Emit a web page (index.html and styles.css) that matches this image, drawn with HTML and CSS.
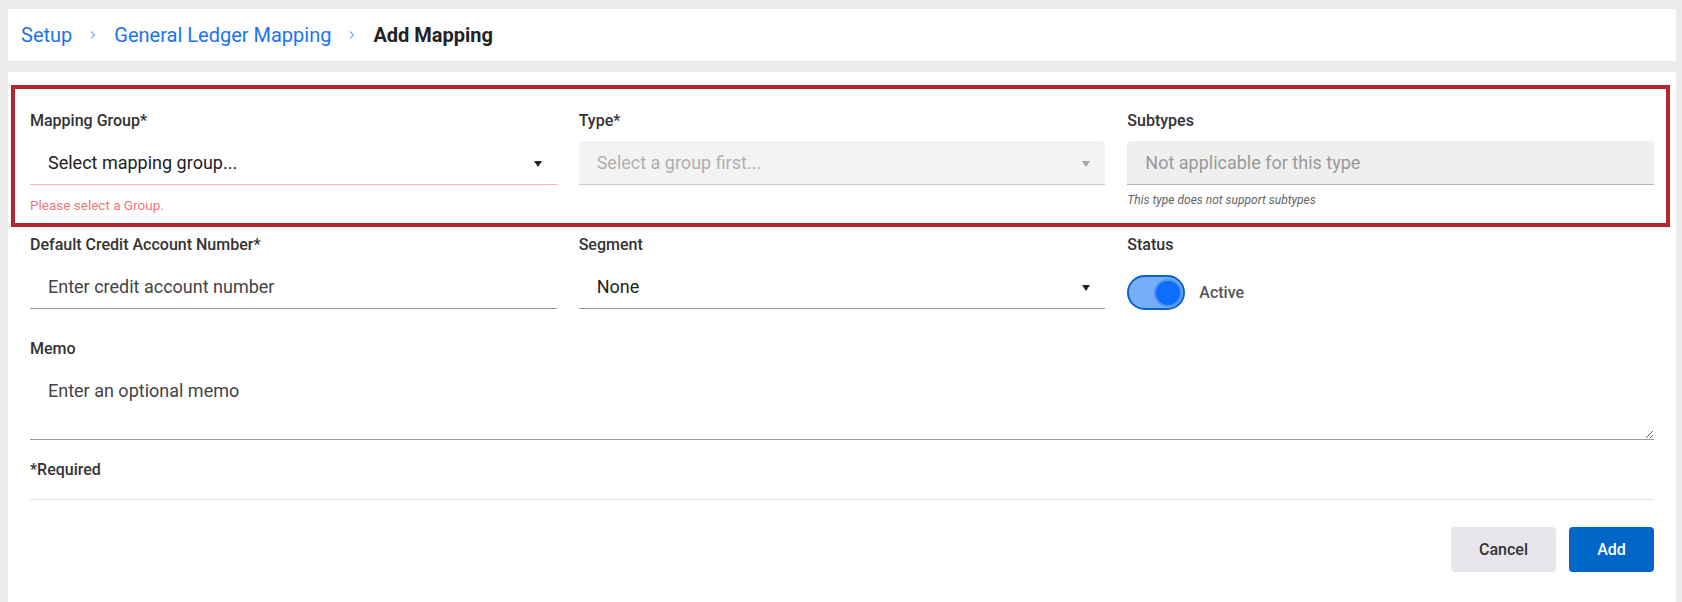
FILE: index.html
```html
<!DOCTYPE html>
<html lang="en">
<head>
    <meta charset="UTF-8">
    <meta name="viewport" content="width=device-width, initial-scale=1.0">
    <title>Add Mapping</title>
    <link rel="stylesheet" href="styles.css">
</head>

<body>
    <nav class="crumbs">
        <a href="#">Setup</a>
        <svg class="crumb-sep" width="6" height="10" viewBox="0 0 6 10"><polyline points="1,1.5 4.5,5 1,8.5"/></svg>
        <a href="#">General Ledger Mapping</a>
        <svg class="crumb-sep" width="6" height="10" viewBox="0 0 6 10"><polyline points="1,1.5 4.5,5 1,8.5"/></svg>
        <span class="crumb-current">Add Mapping</span>
    </nav>

    <form class="panel">
        <!-- 第一行：分组 / 类型 / 子类型 -->
        <div class="form-row row-flagged">
            <div class="field">
                <label class="field-label">Mapping Group*</label>
                <div class="select-wrap invalid">
                    <select class="control">
                        <option>Select mapping group...</option>
                    </select>
                    <span class="caret"></span>
                </div>
                <div class="field-error">Please select a Group.</div>
            </div>
            <div class="field">
                <label class="field-label">Type*</label>
                <div class="select-wrap disabled">
                    <select class="control" disabled>
                        <option>Select a group first...</option>
                    </select>
                    <span class="caret"></span>
                </div>
            </div>
            <div class="field">
                <label class="field-label">Subtypes</label>
                <input class="control" type="text" placeholder="Not applicable for this type" disabled>
                <div class="field-help">This type does not support subtypes</div>
            </div>
        </div>

        <!-- 第二行：贷方账号 / 段 / 状态 -->
        <div class="form-row row-second">
            <div class="field">
                <label class="field-label">Default Credit Account Number*</label>
                <input class="control" type="text" placeholder="Enter credit account number">
            </div>
            <div class="field">
                <label class="field-label">Segment</label>
                <div class="select-wrap">
                    <select class="control">
                        <option>None</option>
                    </select>
                    <span class="caret"></span>
                </div>
            </div>
            <div class="field">
                <label class="field-label">Status</label>
                <div class="switch-line">
                    <span class="switch on"><span class="knob"></span></span>
                    <span class="switch-text">Active</span>
                </div>
            </div>
        </div>

        <div class="field">
            <label class="field-label">Memo</label>
            <textarea class="control memo" placeholder="Enter an optional memo"></textarea>
        </div>

        <div class="required-note">*Required</div>

        <div class="actions">
            <button type="button" class="btn btn-cancel">Cancel</button>
            <button type="button" class="btn btn-add">Add</button>
        </div>
    </form>
</body>

</html>
```

FILE: styles.css
```css
html, body {
    height: 100%;
}
body {
    font-family: Roboto, "Liberation Sans", Arial, sans-serif;
    margin: 0;
    padding: 9px 6px 0 8px;
    box-sizing: border-box;
    display: flex;
    flex-direction: column;
    overflow: hidden;
    background-color: #ebebeb;
    color: #333;
}

/* 面包屑 */
.crumbs {
    display: flex;
    align-items: center;
    flex-shrink: 0;
    height: 52px;
    padding: 0 13px;
    background: white;
    font-size: 20px;
}
.crumbs a {
    color: #1a73f2;
    text-decoration: none;
}
.crumb-sep {
    margin: 0 18px;
    fill: none;
    stroke: #7fb0f6;
    stroke-width: 1.2;
}
.crumb-current {
    font-weight: 700;
    color: #222;
}

/* 表单面板 */
.panel {
    flex: 1;
    background: white;
    margin-top: 11px;
    padding: 13px 22px 0;
}

.form-row {
    display: grid;
    grid-template-columns: repeat(3, 1fr);
    column-gap: 22px;
}
.row-flagged {
    border: 4px solid #b3272d;
    margin: 0 -16px 0 -19px;
    padding: 22px 12px 10px 15px;
}
.row-second {
    margin-top: 8px;
    margin-bottom: 29px;
}

.field-label {
    display: block;
    font-size: 16px;
    font-weight: 500;
    line-height: 20px;
    margin-bottom: 10px;
    color: #333;
}

.control {
    display: block;
    width: 100%;
    box-sizing: border-box;
    height: 44px;
    padding: 0 18px;
    border: none;
    border-bottom: 1px solid #999;
    border-radius: 0;
    background: white;
    font-family: inherit;
    font-size: 18px;
    color: #222;
    outline: none;
    appearance: none;
    -webkit-appearance: none;
}
.control::placeholder {
    color: #444;
    opacity: 1;
}
.control:disabled {
    background: #efefef;
    border-bottom-color: #b3b3b3;
    border-radius: 4px 4px 0 0;
    color: #8e8e8e;
}
.control:disabled::placeholder {
    color: #9a9a9a;
}

.select-wrap {
    position: relative;
}
.select-wrap .control {
    padding-right: 40px;
}
.caret {
    position: absolute;
    right: 15px;
    top: 20px;
    border-left: 4px solid transparent;
    border-right: 4px solid transparent;
    border-top: 6px solid #222;
    pointer-events: none;
}
.select-wrap.invalid .control {
    border-bottom-color: #f4b4b6;
}
.select-wrap.disabled .caret {
    border-top-color: #a5a5a5;
}

.field-error {
    margin-top: 12px;
    font-size: 13.5px;
    line-height: 16px;
    color: #ef777c;
}
.field-help {
    margin-top: 8px;
    font-size: 12px;
    line-height: 14px;
    font-style: italic;
    color: #666;
}

/* 状态开关 */
.switch-line {
    display: flex;
    align-items: center;
    gap: 14px;
    padding-top: 10px;
}
.switch {
    display: flex;
    align-items: center;
    justify-content: flex-end;
    box-sizing: border-box;
    width: 58px;
    height: 35px;
    padding: 0 1.5px;
    border: 2px solid #0b62c9;
    border-radius: 18px;
    background: #76adf7;
}
.knob {
    box-sizing: border-box;
    width: 28px;
    height: 28px;
    border-radius: 50%;
    background: #0d6efd;
    border: 2px solid #4f93f3;
}
.switch-text {
    font-size: 16px;
    font-weight: 500;
    color: #555;
}

.memo {
    height: 71px;
    padding: 10px 18px;
    line-height: 24px;
    resize: vertical;
}

.required-note {
    margin-top: 20px;
    padding-bottom: 19px;
    border-bottom: 1px solid #e0e0e0;
    font-size: 16px;
    font-weight: 500;
    line-height: 20px;
}

.actions {
    display: flex;
    justify-content: flex-end;
    gap: 13px;
    margin-top: 27px;
}
.btn {
    height: 45px;
    padding: 0 26px;
    border: none;
    border-radius: 4px;
    font-family: inherit;
    font-size: 16px;
    font-weight: 500;
    cursor: pointer;
}
.btn-cancel {
    width: 105px;
    background: #e8e5ec;
    color: #333;
}
.btn-add {
    width: 85px;
    background: #0066c8;
    color: white;
}
```
